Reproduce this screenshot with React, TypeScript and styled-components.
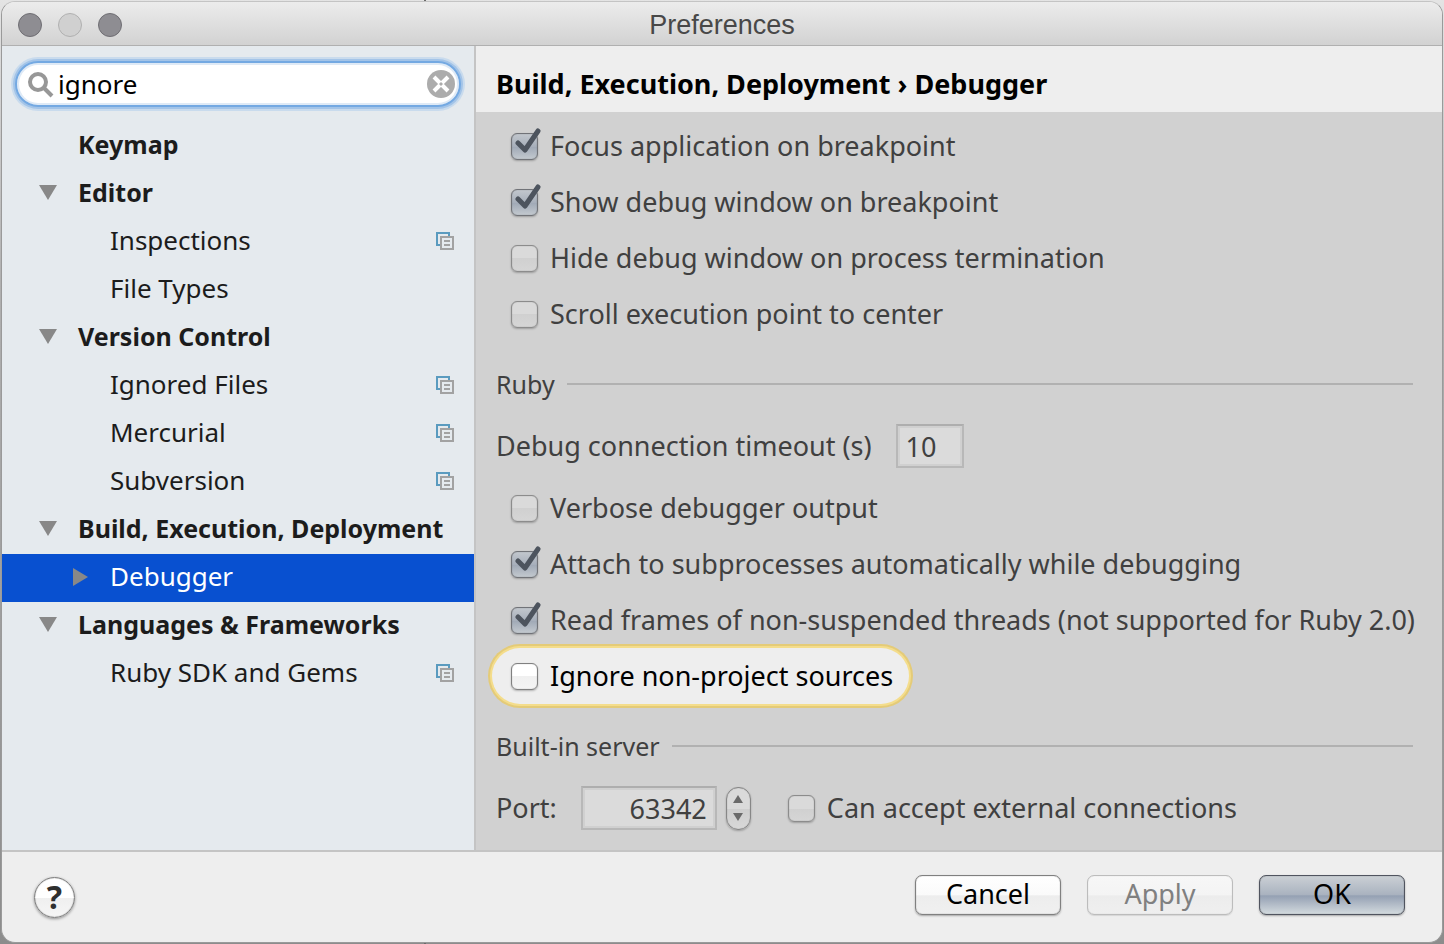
import React, { useState } from "react";
import styled, { createGlobalStyle, css } from "styled-components";

const GlobalStyle = createGlobalStyle`
  *, *::before, *::after { box-sizing: border-box; }
  body {
    margin: 0;
    background:
      linear-gradient(#6b6b6b, #6b6b6b) 424px 0 / 2px 100% no-repeat,
      linear-gradient(#e4e4e4, #b0b0b0 30%, #8c8c8c);
    font-family: "Noto Sans", "Open Sans", sans-serif;
    font-size: 27px;
    line-height: 36px;
    color: #1c1c1c;
  }
  button, input { font: inherit; color: inherit; }
`;

const Backdrop = styled.div`
  min-height: 100vh;
  padding: 1px;
  display: flex;
`;

const Window = styled.div`
  flex: 1;
  min-width: 0;
  display: flex;
  flex-direction: column;
  border: 1px solid #9a9a9a;
  border-top-color: #c4c4c4;
  border-radius: 14px;
  background: #eeeeee;
  overflow: hidden;
`;

const TitleBar = styled.header`
  height: 44px;
  flex: none;
  display: grid;
  grid-template-columns: 1fr auto 1fr;
  align-items: center;
  padding: 2px 16px 0;
  background: linear-gradient(#ececec, #d2d2d2);
  border-bottom: 1px solid #b0b0b0;
`;

const Lights = styled.div`
  display: flex;
  gap: 16px;
`;

const Light = styled.button<{ $dim?: boolean }>`
  width: 24px;
  height: 24px;
  padding: 0;
  border-radius: 50%;
  border: 1px solid ${(p) => (p.$dim ? "#b0b0b0" : "#6f6e73")};
  background: ${(p) => (p.$dim ? "#d0d0d0" : "#8e8d92")};
`;

const Title = styled.h1`
  margin: 0;
  font: 400 27px/36px "Liberation Sans", Arial, sans-serif;
  color: #484848;
`;

const Main = styled.div`
  flex: 1;
  display: flex;
  border-bottom: 2px solid #c4c4c4;
`;

const Sidebar = styled.aside`
  flex: 0 0 474px;
  min-width: 0;
  background: #e5eaee;
  border-right: 2px solid #c4c4c4;
`;

const SearchBox = styled.label`
  display: flex;
  align-items: center;
  height: 46px;
  margin: 15px 13px;
  padding: 0 4px 0 10px;
  gap: 4px;
  border-radius: 23px;
  background: #ffffff;
  border: 2px solid #74a9e2;
  box-shadow: 0 0 0 2px #a3c4e8, 0 0 0 4px #c9dbed, inset 0 0 0 2px #dfeaf6;
`;

const SearchInput = styled.input`
  flex: 1;
  min-width: 0;
  border: 0;
  padding: 0;
  outline: 0;
  background: transparent;
  font-size: 26px;
  color: #000000;
`;

const ClearButton = styled.button`
  display: flex;
  padding: 0;
  border: 0;
  background: none;
`;

const Tree = styled.ul`
  list-style: none;
  margin: 0;
  padding: 0;
`;

const TreeRow = styled.button<{ $group?: boolean; $selected?: boolean }>`
  display: flex;
  align-items: center;
  width: 100%;
  height: 48px;
  border: 0;
  padding: 0 20px 2px ${(p) => (p.$group ? "36px" : "68px")};
  text-align: left;
  white-space: nowrap;
  font-weight: ${(p) => (p.$group ? 700 : 400)};
  font-size: ${(p) => (p.$group ? "25px" : "26px")};
  color: ${(p) => (p.$selected ? "#ffffff" : "#1c1c1c")};
  background: ${(p) => (p.$selected ? "#0850d0" : "transparent")};
`;

const ArrowSlot = styled.span`
  display: flex;
  flex: none;
  width: 40px;
`;

const RowText = styled.span`
  flex: 1;
  padding-bottom: 2px;
`;

const Pane = styled.main`
  flex: 1;
  min-width: 0;
  background: #d1d1d1;
`;

const Crumbs = styled.h2`
  margin: 0;
  height: 66px;
  padding: 20px 20px 10px;
  background: #eeeeee;
  color: #000000;
  font-size: 27px;
  font-weight: 700;
  line-height: 36px;
  white-space: nowrap;
`;

const Content = styled.div`
  padding: 6px 29px 16px 20px;
  color: #404040;
`;

const Options = styled.div`
  display: flex;
  flex-direction: column;
  align-items: flex-start;
  margin-left: -4px;
`;

const OptionLabel = styled.label<{ $highlight?: boolean }>`
  display: flex;
  align-items: center;
  gap: 12px;
  height: 56px;
  padding: 0 16px 0 19px;
  white-space: nowrap;
  ${(p) =>
    p.$highlight &&
    css`
      border-radius: 28px;
      background: #eeeeee;
      color: #000000;
      box-shadow: 0 0 0 2px #f4dd8c, 0 0 0 4px #e4cb78;
    `}
`;

const BoxWrap = styled.span`
  position: relative;
  display: flex;
  flex: none;
`;

const Box = styled.input<{ $bright?: boolean }>`
  appearance: none;
  margin: 0;
  width: 27px;
  height: 27px;
  border: 1px solid ${(p) => (p.$bright ? "#808080" : "#8c8c8c")};
  border-radius: 6px;
  background: ${(p) =>
    p.$bright
      ? "linear-gradient(#ffffff 50%, #f0f0f0 50%, #f4f4f4)"
      : "linear-gradient(#dadada 50%, #d0d0d0 50%, #d6d6d6)"};
  box-shadow: 0 1px 2px rgba(0, 0, 0, 0.25), inset 0 0 1px rgba(0, 0, 0, 0.4);
  &:checked {
    border-color: #717378;
    background: linear-gradient(#c2c7cd, #a7afbb 50%, #a0a9b6 52%, #c3c9cf);
  }
`;

const Tick = styled.svg`
  position: absolute;
  left: 4px;
  top: -5px;
  pointer-events: none;
`;

const SectionTitle = styled.h3`
  display: flex;
  align-items: center;
  gap: 12px;
  margin: 24px 0 0;
  font-size: 25px;
  font-weight: 400;
  line-height: 36px;
  &::after {
    content: "";
    flex: 1;
    height: 2px;
    background: #b1b1b1;
  }
`;

const FieldRow = styled.div`
  display: flex;
  align-items: center;
  height: 52px;
  margin: 18px 0 0;
`;

const DebugRow = styled(FieldRow)`
  margin-bottom: 8px;
`;

const FieldLabel = styled.label`
  margin-right: 24px;
  white-space: nowrap;
`;

const Field = styled.input<{ $wide?: boolean }>`
  width: ${(p) => (p.$wide ? "136px" : "68px")};
  height: 44px;
  padding: 0 8px;
  border: 2px solid #b8b8b8;
  border-top-color: #aeaeae;
  border-radius: 0;
  background: #dbdbdb;
  box-shadow: inset 0 0 0 2px #d0d0d0;
  text-align: ${(p) => (p.$wide ? "right" : "left")};
`;

const Stepper = styled.span`
  display: flex;
  flex-direction: column;
  width: 25px;
  height: 43px;
  margin: 0 18px 0 9px;
  padding: 2px 0;
  border: 1px solid #878787;
  border-radius: 12px;
  background: linear-gradient(#dadada 50%, #cecece 50%, #d8d8d8);
  box-shadow: 0 1px 2px rgba(0, 0, 0, 0.25), inset 0 0 1px rgba(0, 0, 0, 0.4);
`;

const StepButton = styled.button`
  flex: 1;
  display: flex;
  align-items: center;
  justify-content: center;
  padding: 0;
  border: 0;
  background: none;
`;

const Footer = styled.footer`
  flex: none;
  height: 90px;
  display: flex;
  align-items: center;
  justify-content: space-between;
  padding: 0 37px 0 32px;
`;

const HelpButton = styled.button`
  width: 41px;
  height: 41px;
  padding: 0;
  border: 1px solid #808080;
  border-radius: 50%;
  background: linear-gradient(#ffffff 50%, #efefef 50%, #f6f6f6);
  box-shadow: 0 1px 3px rgba(0, 0, 0, 0.4), inset 0 0 1px rgba(0, 0, 0, 0.5);
  color: #2f2f2f;
  font-weight: 700;
  font-size: 32px;
  line-height: 38px;
`;

const Actions = styled.div`
  display: flex;
  gap: 26px;
  padding-bottom: 4px;
`;

const ActionButton = styled.button<{ $primary?: boolean }>`
  width: 146px;
  height: 40px;
  padding: 0 0 2px;
  border: 1px solid ${(p) => (p.$primary ? "#50545f" : "#808080")};
  border-radius: 7px;
  line-height: 36px;
  color: #000000;
  background: ${(p) =>
    p.$primary
      ? "linear-gradient(#cbd0d5, #a9b2bf 50%, #94a0b3 52%, #d3dade)"
      : "linear-gradient(#ffffff, #fafafa 50%, #ededed 52%, #f0f0f0)"};
  box-shadow: 0 1px 2px rgba(0, 0, 0, 0.3), inset 0 0 1px rgba(0, 0, 0, 0.5);
  &:disabled {
    color: #808080;
    border-color: #bcbcbc;
    background: linear-gradient(#f7f7f7, #f4f4f4 50%, #ececec 52%, #efefef);
    box-shadow: 0 1px 1px rgba(0, 0, 0, 0.1), inset 0 0 1px rgba(0, 0, 0, 0.2);
  }
`;

const SearchIcon = () => (
  <svg width="27" height="27" viewBox="0 0 27 27" fill="none" stroke="#979797" aria-hidden="true">
    <circle cx="11" cy="11" r="8" strokeWidth="4" />
    <path d="M17 17l8 8" strokeWidth="4" />
  </svg>
);

const ClearIcon = () => (
  <svg width="28" height="28" viewBox="0 0 28 28" aria-hidden="true">
    <circle cx="14" cy="14" r="14" fill="#acacac" />
    <path d="M7 7l14 14M21 7L7 21" stroke="#ffffff" strokeWidth="4" />
    <path d="M12 14l2-2 2 2-2 2z" fill="#acacac" />
  </svg>
);

const DownArrow = () => (
  <svg width="20" height="16" viewBox="0 0 20 16" fill="#888888" aria-hidden="true">
    <path d="M1 0h18l-9 15z" />
  </svg>
);

const RightArrow = () => (
  <svg width="20" height="18" viewBox="0 0 20 18" fill="#888888" aria-hidden="true">
    <path d="M3 0v18l15-9z" />
  </svg>
);

const ProjectIcon = () => (
  <svg width="18" height="18" viewBox="0 0 18 18" fill="none" strokeWidth="2" aria-hidden="true">
    <path d="M4 13H1V1h12v3" stroke="#5a9bbf" />
    <path d="M5 5h12v12H5zM8 9h6M8 13h6" stroke="#a2a2a2" />
  </svg>
);

type Item = {
  text: string;
  group?: boolean;
  arrow?: "down" | "right";
  project?: boolean;
  selected?: boolean;
};

const items: Item[] = [
  { text: "Keymap", group: true },
  { text: "Editor", group: true, arrow: "down" },
  { text: "Inspections", project: true },
  { text: "File Types" },
  { text: "Version Control", group: true, arrow: "down" },
  { text: "Ignored Files", project: true },
  { text: "Mercurial", project: true },
  { text: "Subversion", project: true },
  { text: "Build, Execution, Deployment", group: true, arrow: "down" },
  { text: "Debugger", arrow: "right", selected: true },
  { text: "Languages & Frameworks", group: true, arrow: "down" },
  { text: "Ruby SDK and Gems", project: true },
];

function Option({ text, on, highlight }: { text: string; on?: boolean; highlight?: boolean }) {
  const [checked, setChecked] = useState(!!on);
  return (
    <OptionLabel $highlight={highlight}>
      <BoxWrap>
        <Box
          type="checkbox"
          $bright={highlight}
          checked={checked}
          onChange={(e) => setChecked(e.target.checked)}
        />
        {checked && (
          <Tick width="26" height="28" viewBox="0 0 26 28" fill="none" aria-hidden="true">
            <path
              d="M3 15l7 7L23 3"
              stroke="#4d545e"
              strokeWidth="5"
              strokeLinecap="round"
              strokeLinejoin="round"
            />
          </Tick>
        )}
      </BoxWrap>
      {text}
    </OptionLabel>
  );
}

export default function App() {
  const [query, setQuery] = useState("ignore");
  const [timeout, setTimeoutValue] = useState("10");
  const [port, setPort] = useState(63342);

  return (
    <Backdrop>
      <GlobalStyle />
      <Window>
        <TitleBar>
          <Lights>
            <Light aria-label="Close" />
            <Light aria-label="Minimize" $dim />
            <Light aria-label="Zoom" />
          </Lights>
          <Title>Preferences</Title>
        </TitleBar>
        <Main>
          <Sidebar>
            <SearchBox>
              <SearchIcon />
              <SearchInput
                aria-label="Search preferences"
                value={query}
                onChange={(e) => setQuery(e.target.value)}
              />
              <ClearButton aria-label="Clear search" onClick={() => setQuery("")}>
                <ClearIcon />
              </ClearButton>
            </SearchBox>
            <Tree>
              {items.map((item) => (
                <li key={item.text}>
                  <TreeRow $group={item.group} $selected={item.selected}>
                    <ArrowSlot>
                      {item.arrow === "down" && <DownArrow />}
                      {item.arrow === "right" && <RightArrow />}
                    </ArrowSlot>
                    <RowText>{item.text}</RowText>
                    {item.project && <ProjectIcon />}
                  </TreeRow>
                </li>
              ))}
            </Tree>
          </Sidebar>
          <Pane>
            <Crumbs>Build, Execution, Deployment › Debugger</Crumbs>
            <Content>
              <Options>
                <Option text="Focus application on breakpoint" on />
                <Option text="Show debug window on breakpoint" on />
                <Option text="Hide debug window on process termination" />
                <Option text="Scroll execution point to center" />
              </Options>
              <SectionTitle>Ruby</SectionTitle>
              <DebugRow>
                <FieldLabel htmlFor="timeout">Debug connection timeout (s)</FieldLabel>
                <Field
                  id="timeout"
                  value={timeout}
                  onChange={(e) => setTimeoutValue(e.target.value)}
                />
              </DebugRow>
              <Options>
                <Option text="Verbose debugger output" />
                <Option text="Attach to subprocesses automatically while debugging" on />
                <Option text="Read frames of non-suspended threads (not supported for Ruby 2.0)" on />
                <Option text="Ignore non-project sources" highlight />
              </Options>
              <SectionTitle>Built-in server</SectionTitle>
              <FieldRow>
                <FieldLabel htmlFor="port">Port:</FieldLabel>
                <Field
                  id="port"
                  $wide
                  value={port}
                  onChange={(e) => setPort(Number(e.target.value) || 0)}
                />
                <Stepper>
                  <StepButton aria-label="Increase port" onClick={() => setPort(port + 1)}>
                    <svg width="10" height="8" viewBox="0 0 10 8" fill="#6a6a6a" aria-hidden="true">
                      <path d="M5 0l5 8H0z" />
                    </svg>
                  </StepButton>
                  <StepButton aria-label="Decrease port" onClick={() => setPort(port - 1)}>
                    <svg width="10" height="8" viewBox="0 0 10 8" fill="#6a6a6a" aria-hidden="true">
                      <path d="M0 0h10L5 8z" />
                    </svg>
                  </StepButton>
                </Stepper>
                <Option text="Can accept external connections" />
              </FieldRow>
            </Content>
          </Pane>
        </Main>
        <Footer>
          <HelpButton aria-label="Help">?</HelpButton>
          <Actions>
            <ActionButton>Cancel</ActionButton>
            <ActionButton disabled>Apply</ActionButton>
            <ActionButton $primary>OK</ActionButton>
          </Actions>
        </Footer>
      </Window>
    </Backdrop>
  );
}
